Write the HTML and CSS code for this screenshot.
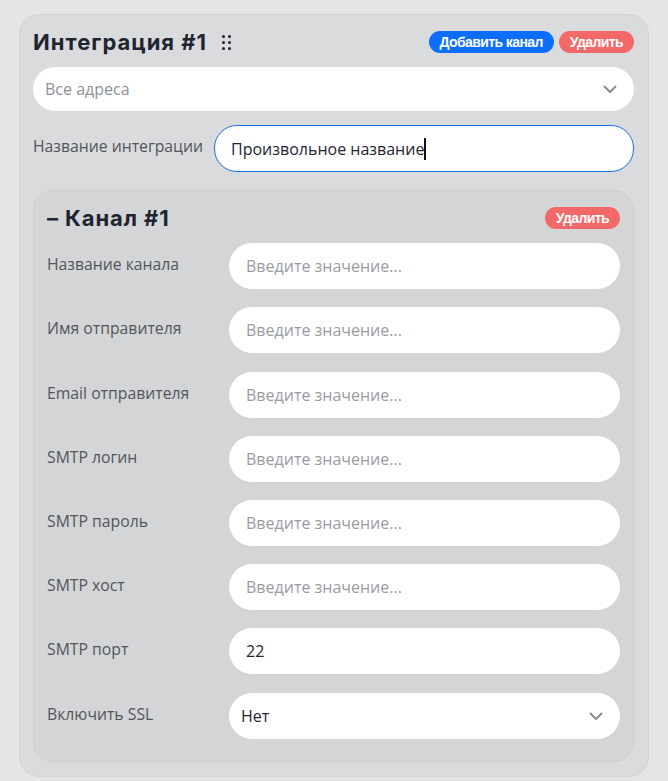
FILE: index.html
```html
<!DOCTYPE html>
<html lang="ru">
<head>
<meta charset="UTF-8">
<meta name="viewport" content="width=device-width, initial-scale=1.0">
<title>Интеграция</title>
<link rel="stylesheet" href="styles.css">
</head>
<body>
<div class="integration">
<div class="card-head">
<h2 class="card-title">Интеграция #1
<span class="drag">
<svg width="9" height="15" viewBox="0 0 9 15"><g fill="#1f2430"><circle cx="1.5" cy="1.5" r="1.5"/><circle cx="7.5" cy="1.5" r="1.5"/><circle cx="1.5" cy="7.5" r="1.5"/><circle cx="7.5" cy="7.5" r="1.5"/><circle cx="1.5" cy="13.5" r="1.5"/><circle cx="7.5" cy="13.5" r="1.5"/></g></svg>
</span>
</h2>
<div class="actions">
<button class="btn btn-blue">Добавить канал</button>
<button class="btn btn-red">Удалить</button>
</div>
</div>

<div class="select">
<span class="placeholder">Все адреса</span>
<svg class="chevron" width="14" height="8" viewBox="0 0 14 8"><path d="M1 1l6 6 6-6" fill="none" stroke="#8a8c91" stroke-width="2"/></svg>
</div>

<div class="field top-field">
<label>Название интеграции</label>
<div class="input focused">Произвольное название<span class="caret"></span></div>
</div>

<div class="channel">
<div class="card-head">
<h3 class="channel-title">– Канал #1</h3>
<button class="btn btn-red">Удалить</button>
</div>
<div class="field">
<label>Название канала</label>
<div class="input placeholder">Введите значение...</div>
</div>
<div class="field">
<label>Имя отправителя</label>
<div class="input placeholder">Введите значение...</div>
</div>
<div class="field">
<label>Email отправителя</label>
<div class="input placeholder">Введите значение...</div>
</div>
<div class="field">
<label>SMTP логин</label>
<div class="input placeholder">Введите значение...</div>
</div>
<div class="field">
<label>SMTP пароль</label>
<div class="input placeholder">Введите значение...</div>
</div>
<div class="field">
<label>SMTP хост</label>
<div class="input placeholder">Введите значение...</div>
</div>
<div class="field">
<label>SMTP порт</label>
<div class="input">22</div>
</div>
<div class="field">
<label>Включить SSL</label>
<div class="select small">
<span>Нет</span>
<svg class="chevron" width="14" height="8" viewBox="0 0 14 8"><path d="M1 1l6 6 6-6" fill="none" stroke="#8a8c91" stroke-width="2"/></svg>
</div>
</div>
</div>
</div>
</body>
</html>
```

FILE: styles.css
```css
body {
font-family: "Open Sans", "Noto Sans", sans-serif;
background-color: #e4e5e7;
margin: 0;
padding: 14px 19px 0;
color: #1f2430;
}

.integration {
background: #dadbdd;
border: 1px solid #d3d4d6;
border-radius: 20px;
padding: 16px 14px 14px 13px;
display: flex;
flex-direction: column;
gap: 14px;
}

.card-head {
display: flex;
align-items: center;
justify-content: space-between;
height: 22px;
}

.card-title {
margin: 0;
font-family: "Inter", sans-serif;
font-size: 22px;
font-weight: 700;
letter-spacing: 1px;
color: #1f2430;
display: flex;
align-items: center;
gap: 15px;
}

.drag {
display: flex;
}

.actions {
display: flex;
gap: 5px;
}

.btn {
font-family: "Liberation Sans", Arial, sans-serif;
font-size: 14px;
font-weight: 700;
letter-spacing: -0.6px;
color: #fff;
border: none;
border-radius: 11px;
height: 22px;
padding: 0 11px;
}

.btn-blue {
background: #0d6efd;
}

.btn-red {
background: #f36868;
}

.select {
background: #fff;
border-radius: 23px;
height: 44px;
padding: 0 17px 0 12px;
display: flex;
align-items: center;
justify-content: space-between;
font-size: 16px;
}

.placeholder {
color: #8e9096;
}

.field {
display: grid;
grid-template-columns: 170px 1fr;
column-gap: 12px;
align-items: start;
}

.top-field {
column-gap: 11px;
}

.field label {
font-size: 15.75px;
color: #52555c;
padding-top: 10px;
white-space: nowrap;
}

.input {
background: #fff;
border-radius: 23px;
height: 46px;
box-sizing: border-box;
padding: 0 17px;
display: flex;
align-items: center;
font-size: 16px;
color: #1f2430;
}

.input.placeholder {
color: #9a9ca2;
}

.top-field .input {
height: 47px;
}

.focused {
border: 1px solid #1a6fe0;
padding-left: 16px;
}

.caret {
display: inline-block;
width: 2px;
height: 22px;
background: #111;
}

.channel {
margin-top: 4px;
background: #d4d5d7;
border: 1px solid #cdced0;
border-radius: 20px;
padding: 16px 13px 22px;
display: flex;
flex-direction: column;
gap: 18.2px;
}

.channel .card-head {
margin-bottom: -4px;
}

.channel-title {
margin: 0;
font-family: "Inter", sans-serif;
font-size: 22px;
font-weight: 700;
letter-spacing: 0.9px;
color: #1f2430;
}

.select.small {
height: 46px;
box-sizing: border-box;
}
```
